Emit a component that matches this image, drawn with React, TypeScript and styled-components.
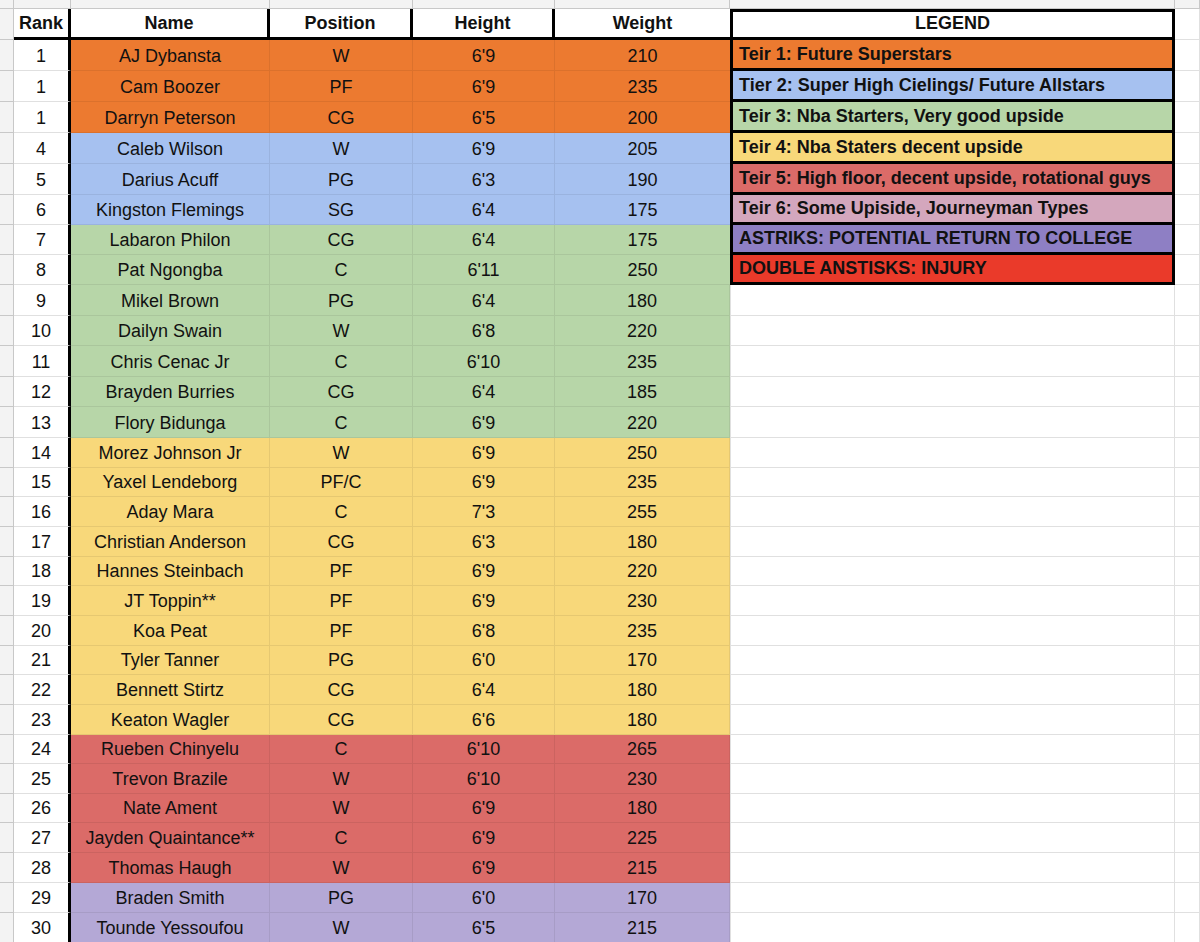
import React from "react";
import styled, { createGlobalStyle, css } from "styled-components";

const Global = createGlobalStyle`
  * { box-sizing: border-box; }
  html, body { margin: 0; padding: 0; background: #ffffff; overflow: hidden; }
  body { font-family: "Liberation Sans", Arial, sans-serif; color: #111; }
`;

const ROW_HEIGHTS = [
  31, 31, 31, 31, 31, 30,
  30, 30, 31, 30, 31, 30, 31,
  30, 29, 30, 30, 29, 30, 30, 29, 30, 30,
  29, 30, 29,
  30, 30, 30, 30,
];

const C = {
  orange: "#ec7a30",
  blue: "#a6c1f0",
  green: "#b7d6a8",
  yellow: "#f8d87a",
  red: "#db6b68",
  pink: "#d4a7bd",
  purpleDark: "#8e7fc4",
  purpleLight: "#b4a8d6",
  brightRed: "#ea3a2a",
};

type Player = { rank: number; name: string; pos: string; h: string; w: number; bg: string };

const P = (rank: number, name: string, pos: string, h: string, w: number, bg: string): Player => ({ rank, name, pos, h, w, bg });

const players: Player[] = [
  P(1, "AJ Dybansta", "W", "6'9", 210, C.orange),
  P(1, "Cam Boozer", "PF", "6'9", 235, C.orange),
  P(1, "Darryn Peterson", "CG", "6'5", 200, C.orange),
  P(4, "Caleb Wilson", "W", "6'9", 205, C.blue),
  P(5, "Darius Acuff", "PG", "6'3", 190, C.blue),
  P(6, "Kingston Flemings", "SG", "6'4", 175, C.blue),
  P(7, "Labaron Philon", "CG", "6'4", 175, C.green),
  P(8, "Pat Ngongba", "C", "6'11", 250, C.green),
  P(9, "Mikel Brown", "PG", "6'4", 180, C.green),
  P(10, "Dailyn Swain", "W", "6'8", 220, C.green),
  P(11, "Chris Cenac Jr", "C", "6'10", 235, C.green),
  P(12, "Brayden Burries", "CG", "6'4", 185, C.green),
  P(13, "Flory Bidunga", "C", "6'9", 220, C.green),
  P(14, "Morez Johnson Jr", "W", "6'9", 250, C.yellow),
  P(15, "Yaxel Lendeborg", "PF/C", "6'9", 235, C.yellow),
  P(16, "Aday Mara", "C", "7'3", 255, C.yellow),
  P(17, "Christian Anderson", "CG", "6'3", 180, C.yellow),
  P(18, "Hannes Steinbach", "PF", "6'9", 220, C.yellow),
  P(19, "JT Toppin**", "PF", "6'9", 230, C.yellow),
  P(20, "Koa Peat", "PF", "6'8", 235, C.yellow),
  P(21, "Tyler Tanner", "PG", "6'0", 170, C.yellow),
  P(22, "Bennett Stirtz", "CG", "6'4", 180, C.yellow),
  P(23, "Keaton Wagler", "CG", "6'6", 180, C.yellow),
  P(24, "Rueben Chinyelu", "C", "6'10", 265, C.red),
  P(25, "Trevon Brazile", "W", "6'10", 230, C.red),
  P(26, "Nate Ament", "W", "6'9", 180, C.red),
  P(27, "Jayden Quaintance**", "C", "6'9", 225, C.red),
  P(28, "Thomas Haugh", "W", "6'9", 215, C.red),
  P(29, "Braden Smith", "PG", "6'0", 170, C.purpleLight),
  P(30, "Tounde Yessoufou", "W", "6'5", 215, C.purpleLight),
];

const legend: { text: string; bg: string }[] = [
  { text: "Teir 1: Future Superstars", bg: C.orange },
  { text: "Tier 2: Super High Cielings/ Future Allstars", bg: C.blue },
  { text: "Teir 3: Nba Starters, Very good upside", bg: C.green },
  { text: "Teir 4: Nba Staters decent upside", bg: C.yellow },
  { text: "Teir 5: High floor, decent upside, rotational guys", bg: C.red },
  { text: "Teir 6: Some Upiside, Journeyman Types", bg: C.pink },
  { text: "ASTRIKS: POTENTIAL RETURN TO COLLEGE", bg: C.purpleDark },
  { text: "DOUBLE ANSTISKS: INJURY", bg: C.brightRed },
];

const GRID = "#e0e0e0";
const HEAD_GRID = "#c8c8c8";
const THICK = "3px solid #000";

const Sheet = styled.div<{ $rows: string }>`
  display: grid;
  grid-template-columns: 14px 57px 199px 143px 142px 175px 445px 25px;
  grid-template-rows: 9px 31px ${(p) => p.$rows};
  width: 1200px;
`;

const cellText = css`
  display: flex;
  align-items: flex-end;
  justify-content: center;
  padding: 0 4px 3px;
  font-size: 18px;
  line-height: 21px;
  white-space: nowrap;
  overflow: hidden;
  color: #111;
`;

const ColHeadCell = styled.div`
  background: #f3f3f3;
  border-right: 1px solid ${HEAD_GRID};
  border-bottom: 1px solid ${HEAD_GRID};
`;

const RowHeadCell = styled.div`
  background: #f3f3f3;
  border-right: 1px solid ${HEAD_GRID};
  border-bottom: 1px solid ${HEAD_GRID};
`;

const HeaderCell = styled.div<{ $noRight?: boolean }>`
  ${cellText};
  font-weight: 700;
  background: #ffffff;
  border-bottom: ${THICK};
  border-right: ${(p) => (p.$noRight ? "none" : THICK)};
`;

const RankCell = styled.div`
  ${cellText};
  background: #ffffff;
  border-right: ${THICK};
  border-bottom: 1px solid ${GRID};
`;

const DataCell = styled.div<{ $bg: string; $last?: boolean }>`
  ${cellText};
  background: ${(p) => p.$bg};
  border-bottom: 1px solid rgba(0, 0, 0, 0.07);
  border-right: ${(p) => (p.$last ? "none" : "1px solid rgba(0, 0, 0, 0.07)")};
`;

const LegendHeader = styled.div`
  ${cellText};
  font-weight: 700;
  background: #ffffff;
  border: ${THICK};
`;

const LegendCell = styled.div<{ $bg: string }>`
  ${cellText};
  justify-content: flex-start;
  padding-left: 6px;
  font-weight: 700;
  background: ${(p) => p.$bg};
  border-left: ${THICK};
  border-right: ${THICK};
  border-bottom: ${THICK};
`;

const EmptyCell = styled.div<{ $edge?: boolean }>`
  background: #ffffff;
  border-bottom: 1px solid ${GRID};
  border-right: 1px solid ${GRID};
  border-left: ${(p) => (p.$edge ? `1px solid ${GRID}` : "none")};
`;

export default function App() {
  const rows = ROW_HEIGHTS.map((h) => `${h}px`).join(" ");
  return (
    <>
      <Global />
      <Sheet $rows={rows}>
        {Array.from({ length: 8 }).map((_, i) => (
          <ColHeadCell key={`ch${i}`} />
        ))}

        <RowHeadCell />
        <HeaderCell>Rank</HeaderCell>
        <HeaderCell>Name</HeaderCell>
        <HeaderCell>Position</HeaderCell>
        <HeaderCell>Height</HeaderCell>
        <HeaderCell $noRight>Weight</HeaderCell>
        <LegendHeader>LEGEND</LegendHeader>
        <EmptyCell />

        {players.map((p, i) => (
          <React.Fragment key={i}>
            <RowHeadCell />
            <RankCell>{p.rank}</RankCell>
            <DataCell $bg={p.bg}>{p.name}</DataCell>
            <DataCell $bg={p.bg}>{p.pos}</DataCell>
            <DataCell $bg={p.bg}>{p.h}</DataCell>
            <DataCell $bg={p.bg} $last={i < legend.length}>{p.w}</DataCell>
            {i < legend.length ? (
              <LegendCell $bg={legend[i].bg}>{legend[i].text}</LegendCell>
            ) : (
              <EmptyCell $edge />
            )}
            <EmptyCell />
          </React.Fragment>
        ))}
      </Sheet>
    </>
  );
}
